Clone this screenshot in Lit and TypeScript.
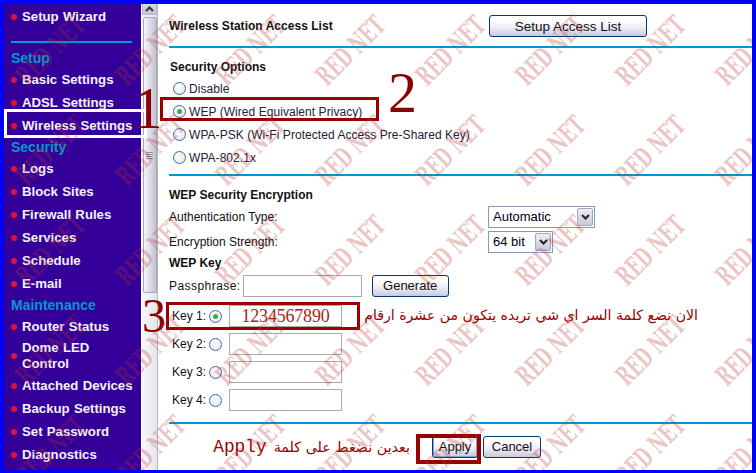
import { LitElement, html, css } from "lit";
import { customElement } from "lit/decorators.js";

const groups: { head?: string; items: string[] }[] = [
  { head: "Setup", items: ["Basic Settings", "ADSL Settings", "Wireless Settings"] },
  { head: "Security", items: ["Logs", "Block Sites", "Firewall Rules", "Services", "Schedule", "E-mail"] },
  { head: "Maintenance", items: ["Router Status", "Dome LED Control", "Attached Devices", "Backup Settings", "Set Password", "Diagnostics"] },
];
const marks: number[] = Array.from({ length: 40 }, (_, i) => i);

@customElement("app-root")
export class AppRoot extends LitElement {
  static styles = css`
    :host { display: block; width: 756px; height: 473px; overflow: hidden; }
    * { box-sizing: border-box; }
    .frame { position: relative; width: 756px; height: 473px; border: solid #0000ff; border-width: 4px 4px 3px 4px; display: flex; font-family: "Liberation Sans", Arial, sans-serif; background: #fff; overflow: hidden; }

    .side { width: 137px; flex: none; background: #330099; color: #f6f2fa; font-weight: bold; font-size: 13.2px; word-spacing: 0.6px; padding-top: 1px; }
    .item { display: flex; gap: 5px; height: 23px; padding-left: 7px; line-height: 16px; align-items: center; white-space: nowrap; }
    .dot { width: 6px; height: 6px; border-radius: 50%; background: #e0103c; flex: none; }
    .rule { height: 2px; background: #0099cc; margin: 13px 9px 5px 7px; }
    .head { color: #0099cc; font-size: 14px; line-height: 20px; padding-left: 7px; height: 20px; }
    .multi { height: 36px; white-space: normal; width: 100px; }

    .bar { width: 17px; flex: none; background: linear-gradient(90deg,#f8f8fa,#e4e4ec); display: flex; flex-direction: column; align-items: center; border-left: 1px solid #fff; border-right: 1px solid #b8b8bc; }
    .btn { width: 15px; height: 11px; background: linear-gradient(#d8d8e4,#c4c4d4); border: 1px solid #b8b8c8; border-top: none; display: flex; justify-content: center; align-items: center; }
    .thumb { width: 14px; height: 276px; margin-top: 2px; border: 1px solid #a8a8b4; border-radius: 2px; background: linear-gradient(90deg,#f4f4f8,#dcdce8 50%,#c0c0d0); display: flex; justify-content: center; align-items: center; }
    .grip { width: 7px; height: 7px; background: repeating-linear-gradient(#8a8a94 0 1px, #f0f0f4 1px 2px); }

    .main { flex: 1; padding: 0 0 0 11px; color: #111; font-size: 12px; min-width: 0; }
    .top { display: flex; height: 42px; padding-top: 11px; font-weight: bold; align-items: flex-start; }
    .top .lbl { width: 320px; padding-top: 4px; letter-spacing: 0.03px; }
    .hr { height: 2px; background: #0099cc; }
    .sec { padding-top: 12px; }
    .b { font-weight: bold; line-height: 14px; height: 14px; }
    .sec .b { padding-left: 1px; }
    .radio { display: flex; align-items: center; height: 23px; gap: 3px; padding-left: 4px; color: #223; letter-spacing: 0.05px; white-space: nowrap; }
    .rd { width: 13px; height: 13px; border-radius: 50%; border: 1px solid #3a6a9a; background: radial-gradient(circle at 40% 35%, #fff, #e2e2ec); flex: none; display: flex; align-items: center; justify-content: center; }
    .rd.on::after { content: ""; width: 5px; height: 5px; border-radius: 50%; background: #2fb33f; }
    .opts { padding-top: 3px; padding-bottom: 5px; }
    button { font-family: inherit; font-size: 13px; color: #111; background: linear-gradient(#fff 20%, #ecebf3 60%, #c9c9da); border: 1px solid #003c74; border-radius: 3px; padding: 0; }
    .setup { width: 158px; height: 22px; font-size: 13.5px; }
    .form { padding-top: 12px; }
    .row { display: grid; grid-template-columns: 319px auto; align-items: center; height: 25px; }
    .rows { margin-top: 2px; }
    .sel { border: 1px solid #7f9db9; background: #fff; height: 22px; display: flex; justify-content: space-between; align-items: center; padding: 0 1px 0 4px; font-size: 13px; color: #001; }
    .sel.a { width: 107px; }
    .sel.c { width: 65px; }
    .arrow { width: 16px; height: 18px; background: linear-gradient(#eee,#c8c8dc); border: 1px solid #a0a8c0; border-radius: 2px; display: flex; align-items: center; justify-content: center; }
    .wepkey { margin-top: 2px; }
    .pass { display: flex; align-items: center; height: 25px; margin-top: 3px; gap: 2px; }
    .pass span { letter-spacing: 0.45px; }
    .field { border: 1px solid #a8a8b0; background: #fff; height: 22px; }
    .pass .field { width: 119px; }
    .gen { width: 77px; height: 22px; margin-left: 8px; }
    .keys { padding: 4px 0 0 3px; }
    .key { display: flex; align-items: center; height: 28px; color: #111; white-space: nowrap; }
    .key .n { width: 37px; }
    .key .rd { margin-right: 7px; }
    .key .field { width: 113px; text-align: center; color: #aa2222; font: 18px/20px "Liberation Serif", serif; letter-spacing: -0.2px; }
    .foot { display: flex; align-items: center; height: 45px; }
    .hr2 { margin-top: 8px; }
    .note { color: #990000; width: 241px; display: flex; justify-content: flex-end; font-family: "DejaVu Sans", sans-serif; font-size: 14.3px; gap: 7px; align-items: center; white-space: nowrap; }
    .note .mono { font: 17.8px "Liberation Mono", monospace; }
    .spacer { width: 22px; flex: none; }
    .apply { width: 46px; height: 22px; box-shadow: inset 0 0 0 1px #7fa5d6; }
    .cancel { width: 58px; height: 22px; margin-left: 5px; }

    .wm { position: absolute; inset: -4px; pointer-events: none; display: grid; grid-template-columns: repeat(8, 100px); grid-auto-rows: 100px; }
    .wm span { display: flex; align-items: center; justify-content: center; transform: rotate(-45deg) scaleX(0.6); font: bold 27px/1 "DejaVu Serif", serif; color: rgba(190,50,50,0.3); white-space: nowrap; }

    .num { position: absolute; color: #8b0000; font-family: "Liberation Serif", serif; line-height: 1; }
    .n1 { left: 129px; top: 75px; font-size: 59px; }
    .n2 { left: 384px; top: 60px; font-size: 58px; }
    .n3 { left: 138px; top: 288px; font-size: 48px; }
    .box { position: absolute; border: 3px solid #990000; }
    .b1 { left: 156px; top: 93px; width: 219px; height: 24px; }
    .b2 { left: 162px; top: 298px; width: 194px; height: 28px; }
    .b3 { left: 412px; top: 430px; width: 65px; height: 30px; border-width: 4px; }
    .wbox { position: absolute; left: 0; top: 105px; width: 143px; height: 29px; border: 3px solid #fff; }
    .arabic { position: absolute; left: 359px; top: 303px; width: 335px; font: 14.1px/16px "DejaVu Sans", sans-serif; color: #990000; text-align: right; white-space: nowrap; }
  `;

  private bullet(t: string, extra = "") {
    return html`<div class="item ${extra}"><i class="dot"></i><span>${t}</span></div>`;
  }

  private arrow() {
    return html`<span class="arrow"><svg width="9" height="6" viewBox="0 0 9 6"><path d="M1 1 4.5 4.5 8 1" fill="none" stroke="#222" stroke-width="2"/></svg></span>`;
  }

  render() {
    return html`
      <div class="frame">
        <nav class="side">
          ${this.bullet("Setup Wizard")}
          <div class="rule"></div>
          ${groups.map(
            (g) => html`<div class="head">${g.head}</div>
              ${g.items.map((t) => this.bullet(t, t === "Dome LED Control" ? "multi" : ""))}`
          )}
        </nav>
        <div class="bar">
          <div class="btn">
            <svg width="9" height="6" viewBox="0 0 9 6"><path d="M1 5 4.5 1.5 8 5" fill="none" stroke="#333" stroke-width="2"/></svg>
          </div>
          <div class="thumb"><div class="grip"></div></div>
        </div>
        <main class="main">
          <div class="top">
            <div class="lbl">Wireless Station Access List</div>
            <button class="setup">Setup Access List</button>
          </div>
          <div class="hr"></div>
          <div class="sec">
            <div class="b">Security Options</div>
            <div class="opts">
              <div class="radio"><i class="rd"></i>Disable</div>
              <div class="radio"><i class="rd on"></i>WEP (Wired Equivalent Privacy)</div>
              <div class="radio"><i class="rd"></i>WPA-PSK (Wi-Fi Protected Access Pre-Shared Key)</div>
              <div class="radio"><i class="rd"></i>WPA-802.1x</div>
            </div>
          </div>
          <div class="hr"></div>
          <div class="form">
            <div class="b">WEP Security Encryption</div>
            <div class="rows">
              <div class="row">
                <div>Authentication Type:</div>
                <div class="sel a">Automatic${this.arrow()}</div>
              </div>
              <div class="row">
                <div>Encryption Strength:</div>
                <div class="sel c">64 bit${this.arrow()}</div>
              </div>
            </div>
            <div class="b wepkey">WEP Key</div>
            <div class="pass">
              <span>Passphrase:</span>
              <div class="field"></div>
              <button class="gen">Generate</button>
            </div>
            <div class="keys">
              <div class="key"><span class="n">Key 1:</span><i class="rd on"></i><div class="field">1234567890</div></div>
              <div class="key"><span class="n">Key 2:</span><i class="rd"></i><div class="field"></div></div>
              <div class="key"><span class="n">Key 3:</span><i class="rd"></i><div class="field"></div></div>
              <div class="key"><span class="n">Key 4:</span><i class="rd"></i><div class="field"></div></div>
            </div>
            <div class="hr hr2"></div>
            <div class="foot">
              <div class="note"><span class="mono">Apply</span><span dir="rtl">بعدين نضغط على كلمة</span></div>
              <span class="spacer"></span>
              <button class="apply">Apply</button>
              <button class="cancel">Cancel</button>
            </div>
          </div>
        </main>

        <div class="arabic" dir="rtl">الان نضع كلمة السر اي شي تريده يتكون من عشرة ارقام</div>
        <div class="wbox"></div>
        <div class="box b1"></div>
        <div class="box b2"></div>
        <div class="box b3"></div>
        <div class="num n1">1</div>
        <div class="num n2">2</div>
        <div class="num n3">3</div>
        <div class="wm">${marks.map(() => html`<span>RED NET</span>`)}</div>
      </div>
    `;
  }
}
